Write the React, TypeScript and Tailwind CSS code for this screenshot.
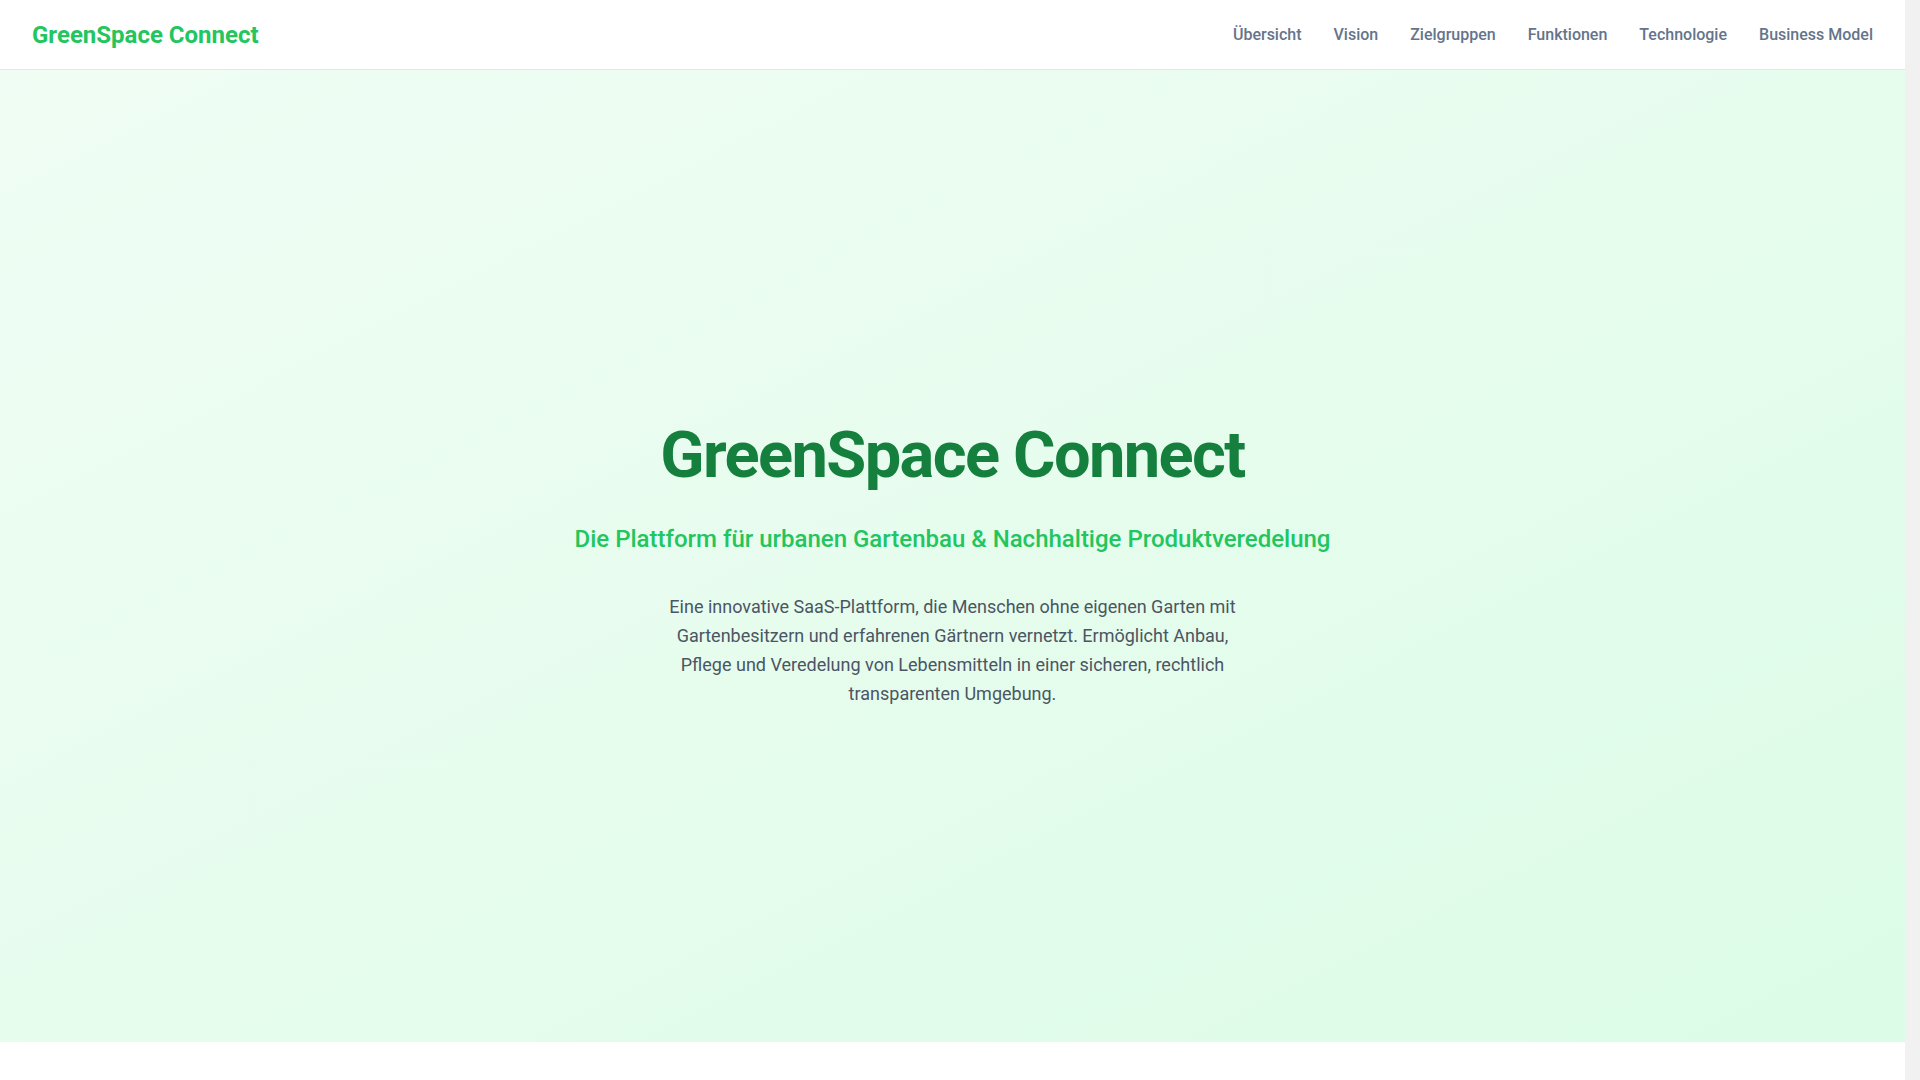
const navItems = ["Übersicht", "Vision", "Zielgruppen", "Funktionen", "Technologie", "Business Model"];

function Header() {
  return (
    <header className="sticky top-0 z-10 border-b border-gray-200 bg-white">
      <div className="flex h-[69px] items-center justify-between px-8">
        <a href="#" className="text-2xl font-bold text-[#22c55e]">
          GreenSpace Connect
        </a>
        <nav className="flex items-center gap-8">
          {navItems.map((item) => (
            <a key={item} href="#" className="text-base font-medium text-[#64748b]">
              {item}
            </a>
          ))}
        </nav>
      </div>
    </header>
  );
}

function Hero() {
  return (
    <section className="flex h-[972px] items-center justify-center bg-gradient-to-br from-[#f0fdf4] to-[#dcfce7] px-6 pt-[16px]">
      <div className="flex flex-col items-center text-center">
        <h1 className="text-[65px] font-bold leading-[1.1] tracking-tight text-[#15803d]">
          GreenSpace Connect
        </h1>
        <p className="mt-8 text-2xl font-medium text-[#22c55e]">
          Die Plattform für urbanen Gartenbau &amp; Nachhaltige Produktveredelung
        </p>
        <p className="mt-[38px] max-w-[580px] text-lg leading-[1.6] text-[#4b5563]">
          Eine innovative SaaS-Plattform, die Menschen ohne eigenen Garten mit Gartenbesitzern und
          erfahrenen Gärtnern vernetzt. Ermöglicht Anbau, Pflege und Veredelung von Lebensmitteln in
          einer sicheren, rechtlich transparenten Umgebung.
        </p>
      </div>
    </section>
  );
}

export default function App() {
  // reserve the scrollbar gutter so the layout sits like in a classic-scrollbar window
  return (
    <div className="h-screen overflow-y-scroll bg-[#f1f1f1] pr-[15px] font-['Roboto',sans-serif]">
      <div className="bg-white">
        <Header />
        <Hero />
        <section className="h-[600px] bg-white" />
      </div>
    </div>
  );
}
